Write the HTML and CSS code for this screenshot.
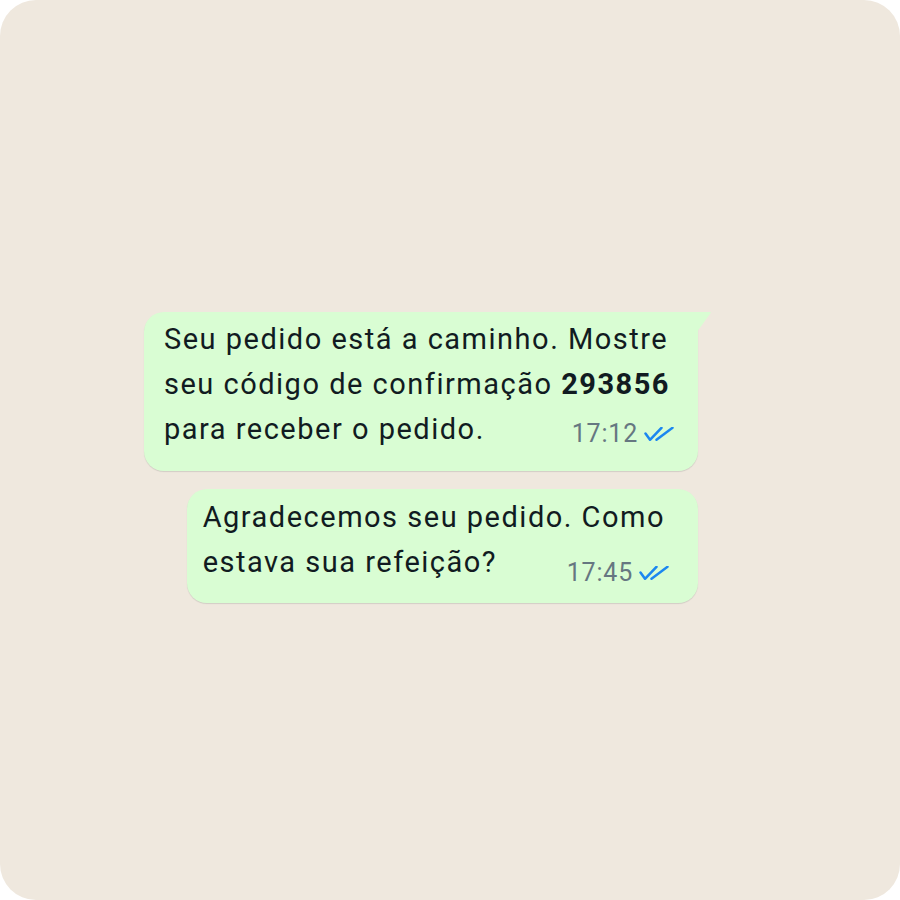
FILE: index.html
```html
<!DOCTYPE html>
<html lang="pt-BR">
<head>
    <meta charset="UTF-8">
    <meta name="viewport" content="width=device-width, initial-scale=1.0">
    <title>Conversa</title>
    <link rel="stylesheet" href="styles.css">
</head>
<body>
    <div class="chat">
        <div class="bubble bubble-tail">
            <p class="text">Seu pedido está a caminho. Mostre<br>seu código de confirmação <b>293856</b><br>para receber o pedido.</p>
            <span class="meta">
                <span class="time">17:12</span>
                <svg class="ticks" width="30" height="14" viewBox="0 0 30 14">
                    <polyline points="1.5,6.5 6,12.8 17.5,0.8" />
                    <line x1="12.5" y1="12.8" x2="28.5" y2="0.8" />
                </svg>
            </span>
        </div>

        <div class="bubble bubble-second">
            <p class="text">Agradecemos seu pedido. Como<br>estava sua refeição?</p>
            <span class="meta">
                <span class="time">17:45</span>
                <svg class="ticks" width="30" height="14" viewBox="0 0 30 14">
                    <polyline points="1.5,6.5 6,12.8 17.5,0.8" />
                    <line x1="12.5" y1="12.8" x2="28.5" y2="0.8" />
                </svg>
            </span>
        </div>
    </div>
</body>
</html>
```

FILE: styles.css
```css
body {
    margin: 0;
    background-color: #fff;
    font-family: Roboto, "Noto Sans", Arial, sans-serif;
}

.chat {
    width: 900px;
    height: 900px;
    box-sizing: border-box;
    background-color: #efe8de;
    border-radius: 36px;
    display: flex;
    flex-direction: column;
    align-items: flex-end;
    justify-content: center;
    gap: 18px;
    padding: 14px 202px 0 0;
}

.bubble {
    position: relative;
    display: grid;
    background-color: #d9fdd3;
    border-radius: 20px;
    padding: 5px 28px 19px 20px;
    box-shadow: 0 1px 1px rgba(11, 20, 26, 0.12);
}

.bubble-tail {
    border-top-right-radius: 0;
}

/* the little tail on the top right */
.bubble-tail::after {
    content: "";
    position: absolute;
    top: 0;
    right: -13px;
    width: 13px;
    height: 19px;
    background-color: #d9fdd3;
    clip-path: polygon(0 0, 12px 0, 13px 1px, 0 19px);
}

.bubble-second {
    padding: 6px 33px 18px 16px;
}

.text {
    grid-area: 1 / 1;
    margin: 0;
    font-size: 29px;
    letter-spacing: 1.5px;
    line-height: 45px;
    color: #111b21;
}

.text b {
    font-weight: 700;
}

.meta {
    grid-area: 1 / 1;
    justify-self: end;
    align-self: end;
    display: flex;
    align-items: center;
    gap: 6px;
    margin: 0 -4px 3px 0;
}

.bubble-second .meta {
    margin-bottom: -3px;
}

.time {
    font-size: 25px;
    letter-spacing: 0.8px;
    line-height: 30px;
    color: #667781;
}

.ticks {
    fill: none;
    stroke: #1b87f0;
    stroke-width: 2.5;
    stroke-linecap: round;
    stroke-linejoin: round;
}
```
